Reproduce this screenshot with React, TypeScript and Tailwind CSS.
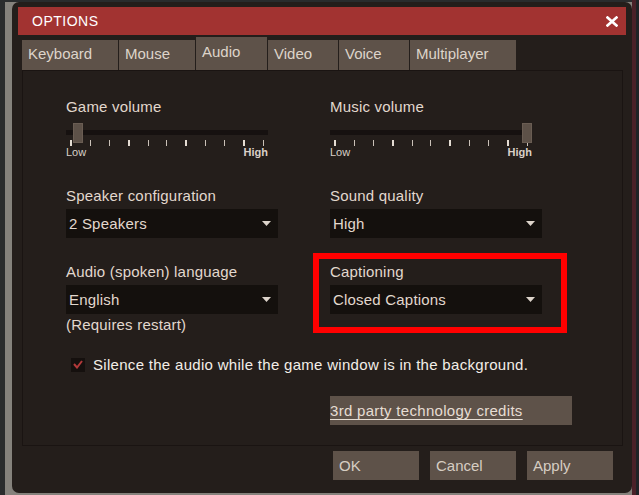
import React from "react";

const font = { fontFamily: '"Liberation Sans", Arial, sans-serif' };

const tabs = [
  { label: "Keyboard", cls: "w-[96px] h-[30px] pt-[5px]" },
  { label: "Mouse", cls: "w-[76px] h-[30px] pt-[5px]" },
  { label: "Audio", cls: "w-[71px] h-[33px] pt-[6px]" },
  { label: "Video", cls: "w-[70px] h-[30px] pt-[5px]" },
  { label: "Voice", cls: "w-[70px] h-[30px] pt-[5px]" },
  { label: "Multiplayer", cls: "w-[106px] h-[30px] pt-[5px]" },
];

function Slider({ thumbCls }: { thumbCls: string }) {
  const ticks = Array.from({ length: 11 }, (_, i) => i);
  return (
    <div className="w-[202px]">
      <div className="relative h-[20px]">
        <div className="absolute left-0 top-[7px] w-[202px] h-[5px] bg-[#161110]" />
        <div className={`absolute top-0 w-[10px] h-[20px] bg-[#5d5148] border border-[#6a5d53] ${thumbCls}`} />
      </div>
      <div className="mt-[-3px] mx-[4px] h-[6px] flex justify-between">
        {ticks.map((i) =>
          i % 3 === 0 ? (
            <div key={i} className="w-[2px] h-full bg-[#e4dcd3]" />
          ) : (
            <div key={i} className="w-[1px] h-full bg-[#c9c0b7]" />
          )
        )}
      </div>
      <div className="flex justify-between text-[11px] leading-[13px] text-[#d9d0c7]">
        <span>Low</span>
        <span className="font-bold">High</span>
      </div>
    </div>
  );
}

function Dropdown({ value, wCls }: { value: string; wCls: string }) {
  return (
    <div className={`mt-[5px] h-[29px] bg-[#14100d] flex items-center justify-between pl-[3px] pr-[7px] ${wCls}`}>
      <span className="text-[15px] leading-[17px] tracking-[0.2px] text-[#e2d8ce]">{value}</span>
      <svg width="9" height="5" viewBox="0 0 9 5">
        <path d="M0 0 H9 L4.5 5 Z" fill="#ddd4cb" />
      </svg>
    </div>
  );
}

function Label({ children }: { children: React.ReactNode }) {
  return <div className="text-[15px] leading-[17px] tracking-[0.2px] text-[#e2d8ce] whitespace-nowrap">{children}</div>;
}

export default function App() {
  return (
    <div className="w-[639px] h-[495px] flex bg-[#2a2c2d] overflow-hidden" style={font}>
      <div className="w-[5px] shrink-0 bg-[#2a2c2d]" />
      <div className="w-[7px] shrink-0 bg-[#85827c] mt-[2px]" />
      <div className="w-[620px] shrink-0 flex flex-col bg-[#85827c]">
        <div className="h-[2px] bg-[#2a2c2d]" />
        <div className="h-[491px] rounded-[7px] bg-[#241e1b] pt-[5px] flex flex-col">
          {/* Title bar */}
          <div className="mx-[6px] h-[28px] bg-[#a23331] flex items-center justify-between pl-[14px] pr-[8px]">
            <span className="text-[14px] leading-[16px] text-white tracking-[0.5px]">OPTIONS</span>
            <svg width="12" height="11" viewBox="0 0 12 11">
              <path d="M1.5 1.5 L10.5 9.5 M10.5 1.5 L1.5 9.5" stroke="#ffffff" strokeWidth="2.6" strokeLinecap="square" />
            </svg>
          </div>
          {/* Tabs */}
          <div className="mt-[2px] ml-[10px] h-[33px] flex items-end gap-[1px]">
            {tabs.map((t) => (
              <div key={t.label} className={`bg-[#5e5249] pl-[6px] text-[15px] leading-[17px] text-[#ddd4ca] ${t.cls}`}>
                {t.label}
              </div>
            ))}
          </div>
          {/* Panel */}
          <div className="ml-[10px] w-[601px] h-[376px] border border-[#1a1412] pl-[43px] pt-[27px]">
            {/* Row 1 */}
            <div className="grid grid-cols-[264px_1fr]">
              <div>
                <Label>Game volume</Label>
                <div className="mt-[8px]">
                  <Slider thumbCls="left-[7px]" />
                </div>
              </div>
              <div>
                <Label>Music volume</Label>
                <div className="mt-[8px]">
                  <Slider thumbCls="left-[192px]" />
                </div>
              </div>
            </div>
            {/* Row 2 */}
            <div className="mt-[28px] grid grid-cols-[264px_1fr]">
              <div>
                <Label>Speaker configuration</Label>
                <Dropdown value="2 Speakers" wCls="w-[212px]" />
              </div>
              <div>
                <Label>Sound quality</Label>
                <Dropdown value="High" wCls="w-[212px]" />
              </div>
            </div>
            {/* Row 3 */}
            <div className="mt-[25px] grid grid-cols-[264px_1fr]">
              <div>
                <Label>Audio (spoken) language</Label>
                <Dropdown value="English" wCls="w-[212px]" />
                <div className="mt-[2px]">
                  <Label>(Requires restart)</Label>
                </div>
              </div>
              <div className="relative">
                <Label>Captioning</Label>
                <Dropdown value="Closed Captions" wCls="w-[212px]" />
                <div className="absolute left-[-17px] top-[-10px] w-[254px] h-[80px] border-[6px] border-[#ff0000]" />
              </div>
            </div>
            {/* Checkbox */}
            <div className="mt-[23px] pl-[5px] flex items-center gap-[8px] h-[17px]">
              <div className="w-[14px] h-[14px] bg-[#15100e] flex items-center justify-center">
                <svg width="10" height="9" viewBox="0 0 10 9">
                  <path d="M1 4 L4 7.5 L9 1" stroke="#b3393a" strokeWidth="2" fill="none" />
                </svg>
              </div>
              <span className="text-[15px] leading-[17px] tracking-[0.3px] text-[#f3eee8] whitespace-nowrap">
                Silence the audio while the game window is in the background.
              </span>
            </div>
            {/* Credits */}
            <div className="mt-[23px] ml-[264px] w-[242px] h-[29px] bg-[#5e5249] flex items-center">
              <span className="text-[15px] leading-[17px] tracking-[0.3px] text-[#e6ddd3] underline underline-offset-[3px]">
                3rd party technology credits
              </span>
            </div>
          </div>
          {/* Buttons */}
          <div className="mt-[5px] pr-[19px] flex justify-end gap-[11px]">
            {["OK", "Cancel", "Apply"].map((b) => (
              <div key={b} className="w-[86px] h-[29px] bg-[#5e5249] flex items-center pl-[6px] text-[15px] leading-[17px] text-[#d6cdc3]">
                {b}
              </div>
            ))}
          </div>
        </div>
        <div className="h-[2px] bg-[#85827c]" />
      </div>
      <div className="w-[4px] shrink-0 bg-[#4a2128]" />
      <div className="w-[3px] shrink-0 bg-[#1f2326]" />
    </div>
  );
}
